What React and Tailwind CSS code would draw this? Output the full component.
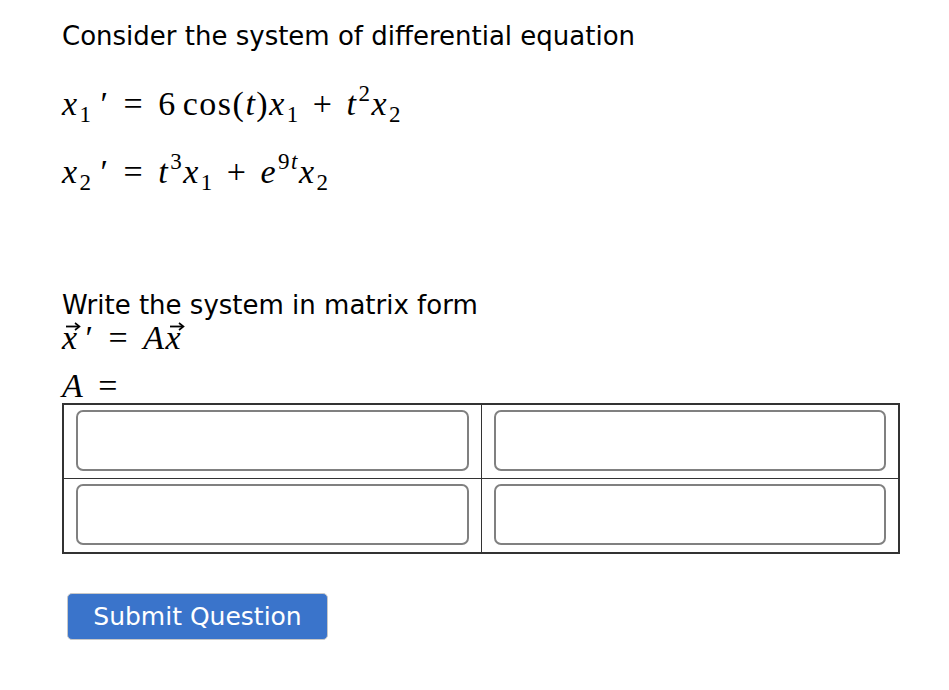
import React from "react";

const M = ({ children, className = "" }) => (
  <span className={"italic " + className}>{children}</span>
);
const Sub = ({ children }) => (
  <span className="not-italic relative top-[7px] text-[23px] leading-none ml-[1px]">{children}</span>
);
const Sup = ({ children }) => (
  <span className="not-italic relative -top-[14px] text-[23px] leading-none ml-[1px]">{children}</span>
);
const Vec = ({ children }) => (
  <span className="relative inline-block italic">
    {children}
    <svg className="absolute left-[3px] top-[1px]" width="16" height="9" viewBox="0 0 16 9">
      <path d="M1 4.5 H14" stroke="#000" strokeWidth="1.8" fill="none" />
      <path d="M10 1 L14.5 4.5 L10 8" stroke="#000" strokeWidth="1.6" fill="none" />
    </svg>
  </span>
);

const Cell = () => (
  <td className="border border-[#333] pl-[12px] pr-[12px] pt-[5px] pb-[7px]">
    <input className="block w-full h-[61px] border-2 border-[#808080] rounded-[7px] bg-white outline-none" />
  </td>
);

const math = "font-['Liberation_Serif',serif] text-[34px] tracking-[1.5px]";
const sans = "font-['DejaVu_Sans',sans-serif]";

export default function App() {
  return (
    <div className="bg-white w-[949px] h-[690px] pl-[62px] pt-[18px] text-black">
      <p className={"text-[26px] leading-[36px] " + sans}>
        Consider the system of differential equation
      </p>
      <div className={math + " leading-[36px] mt-[32px]"}>
        <M>x</M><Sub>1</Sub><span className="ml-[8px]">′</span>
        <span className="mx-[14px]">=</span>6<span className="ml-[6px]">cos</span>(<M>t</M>)<M>x</M><Sub>1</Sub>
        <span className="mx-[13px]">+</span><M>t</M><Sup>2</Sup><M>x</M><Sub>2</Sub>
      </div>
      <div className={math + " leading-[36px] mt-[32px]"}>
        <M>x</M><Sub>2</Sub><span className="ml-[8px]">′</span>
        <span className="mx-[14px]">=</span><M>t</M><Sup>3</Sup><M>x</M><Sub>1</Sub>
        <span className="mx-[13px]">+</span><M>e</M><Sup>9<i>t</i></Sup><M>x</M><Sub>2</Sub>
      </div>
      <p className={"mt-[99px] text-[26px] leading-[32px] " + sans}>
        Write the system in matrix form
      </p>
      <div className={math + " leading-[34px]"}>
        <Vec>x</Vec><span className="ml-[7px]">′</span>
        <span className="mx-[14px]">=</span><M>A</M><Vec>x</Vec>
      </div>
      <div className={math + " leading-[34px] mt-[14px]"}>
        <M>A</M><span className="ml-[14px]">=</span>
      </div>
      <table className="border-collapse border-2 border-[#333] w-[838px]">
        <tbody>
          <tr><Cell /><Cell /></tr>
          <tr><Cell /><Cell /></tr>
        </tbody>
      </table>
      <button className={"mt-[39px] ml-[5px] w-[261px] h-[47px] bg-[#3a74cb] border border-[#c8c8c8] rounded-[5px] text-white text-[25px] leading-none " + sans}>
        Submit Question
      </button>
    </div>
  );
}
